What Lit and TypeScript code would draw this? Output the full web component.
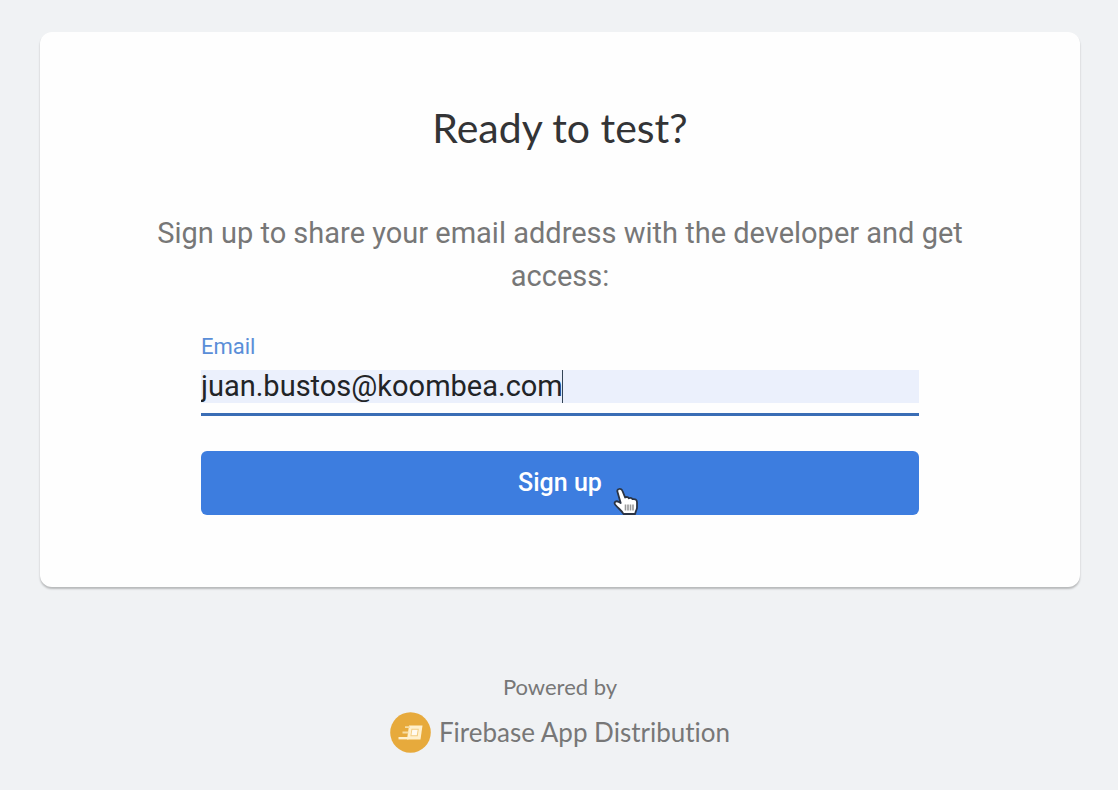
import { LitElement, html, css } from "lit";
import { customElement, state } from "lit/decorators.js";

@customElement("app-root")
export class AppRoot extends LitElement {
  @state() private email = "juan.bustos@koombea.com";

  static styles = css`
    :host {
      display: block;
      box-sizing: border-box;
      min-height: 100vh;
      padding: 32px 38px 36px 40px;
      background: #f0f2f4;
      font-family: Roboto, sans-serif;
      color: #777;
    }
    .card {
      box-sizing: border-box;
      padding: 70px 100px 72px;
      background: #fefefe;
      border-radius: 12px;
      box-shadow: 0 2px 2px rgba(0, 0, 0, 0.24);
      text-align: center;
    }
    h1 {
      margin: 0 0 58px;
      font: 400 41px/52px Lato, sans-serif;
      color: #333436;
    }
    p {
      margin: 0;
    }
    .lead {
      font-size: 29px;
      line-height: 43px;
    }
    form {
      margin: 36px 61px 0;
    }
    .label {
      display: block;
      text-align: left;
      font-size: 22px;
      line-height: 26px;
      color: #5a8ed8;
    }
    .field {
      position: relative;
      padding: 10px 0 10px;
      border-bottom: 3px solid #3a6db5;
    }
    input {
      display: block;
      box-sizing: border-box;
      width: 100%;
      height: 33px;
      padding: 0;
      border: 0;
      outline: 0;
      background: #ebf0fc;
      font: 400 29px/33px Roboto, sans-serif;
      color: #222427;
    }
    .caret {
      position: absolute;
      left: 361px;
      top: 10px;
      width: 1px;
      height: 33px;
      background: #345;
    }
    .submit {
      position: relative;
      margin-top: 35px;
    }
    button {
      display: block;
      width: 100%;
      height: 64px;
      padding: 0;
      border: 0;
      border-radius: 6px;
      background: #3d7ddf;
      font: 500 25px/64px Roboto, sans-serif;
      color: #fff;
    }
    .pointer {
      position: absolute;
      left: 411px;
      top: 35px;
      width: 28px;
      height: 32px;
    }
    footer {
      margin-top: 86px;
      text-align: center;
    }
    .powered {
      font: 400 22px/28px Lato, sans-serif;
    }
    .brand {
      display: flex;
      align-items: center;
      justify-content: center;
      gap: 8px;
      margin-top: 10px;
      font: 400 26px/42px Lato, sans-serif;
      font-variant-ligatures: none;
    }
    .logo {
      width: 41px;
      height: 41px;
    }
  `;

  render() {
    return html`
      <main class="card">
        <h1>Ready to test?</h1>
        <p class="lead">Sign up to share your email address with the developer and get access:</p>
        <form @submit=${(e: Event) => e.preventDefault()}>
          <label class="label" for="email">Email</label>
          <div class="field">
            <input id="email" type="email" .value=${this.email} />
            <span class="caret"></span>
          </div>
          <div class="submit">
            <button type="submit">Sign up</button>
            <svg class="pointer" viewBox="0 0 28 32" aria-hidden="true">
              <path
                d="M7 3c1.500-.6 3 .4 3.500 2l2.600 6.500c1.600-1 3.200-.4 3.800.8 1.500-.8 3-.3 3.700.9 2.400-.6 4.400.6 4.400 3v5.300c0 2.400-1.500 3.400-1.800 6.500H11.500c-1.500-3.400-5.400-5.600-8.200-9.200-1.900-2.600.8-4.600 3.600-2.800l1.800 1.100L5.500 6C5 4.500 5.500 3.400 7 3z"
                fill="#fff" stroke="#2b3444" stroke-width="1.800" stroke-linejoin="round" />
              <path d="M13.500 18.500v6M16 18.500v6M18.500 18.500v6M21 18.500v6" stroke="#999" stroke-width="1.600" />
            </svg>
          </div>
        </form>
      </main>
      <footer>
        <p class="powered">Powered by</p>
        <div class="brand">
          <svg class="logo" viewBox="0 0 41 41" aria-hidden="true">
            <circle cx="20.500" cy="20.500" r="20.300" fill="#e7aa3c" />
            <path d="M19 13.500H32.500L30.500 27.500H17z" fill="#fff0cc" />
            <path d="M21.500 16.700H28.800L27.700 24.200H20.400z" fill="#f3cb7e" />
            <path d="M22.300 17.700h5.400l-.9 5.500h-5.400z" fill="#fffaf0" />
            <path d="M15 15.200h5M12.500 20.500h6" stroke="#f8dda3" stroke-width="1.800" />
            <path d="M8.500 26.200h10" stroke="#fff0cc" stroke-width="2.400" />
          </svg>
          <span>Firebase App Distribution</span>
        </div>
      </footer>
    `;
  }
}
